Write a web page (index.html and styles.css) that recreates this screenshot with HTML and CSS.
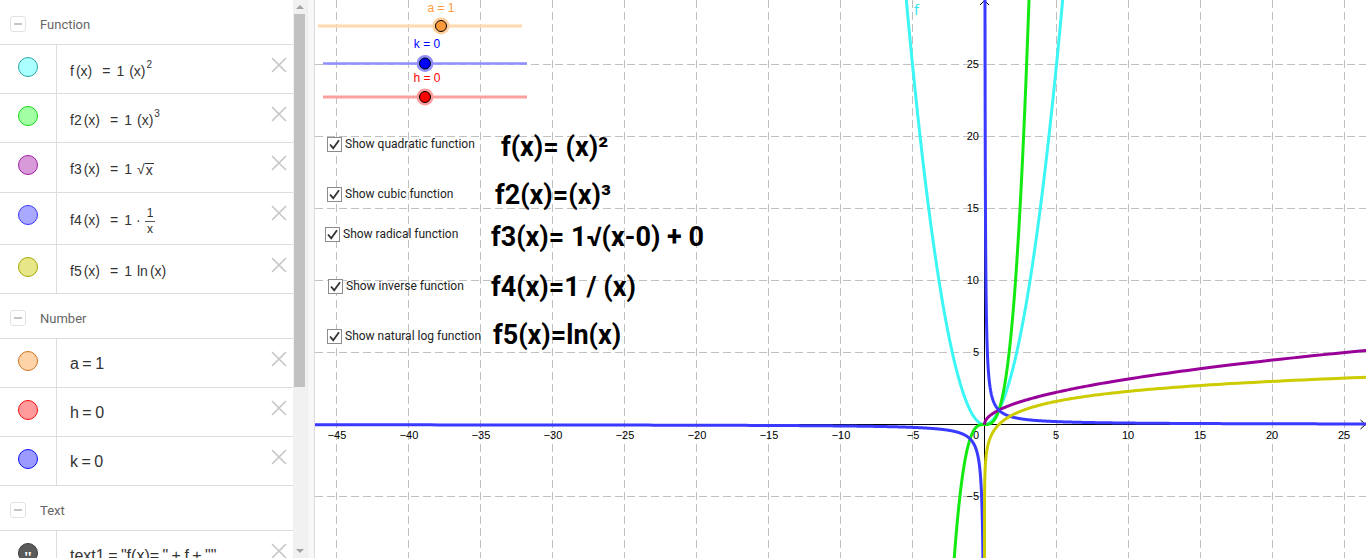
FILE: index.html
```html
<!DOCTYPE html>
<html lang="en">
<head>
<meta charset="utf-8">
<title>Parent functions</title>
<link rel="stylesheet" href="styles.css">
</head>
<body>
<div class="app">
  <aside class="algebra">
    <div class="list">
      <div class="group-head first"><span class="toggle"></span><span>Function</span></div>

      <div class="item">
        <div class="marker-col"><span class="marker m-f"></span></div>
        <div class="expr"><span>f</span><span class="sp"></span><span>(x)</span><span class="rel">=</span><span>1</span><span class="sp2"></span><span>(x)</span><sup>2</sup></div>
        <svg class="del" viewBox="0 0 16 16"><path d="M1 1L15 15M15 1L1 15"/></svg>
      </div>

      <div class="item">
        <div class="marker-col"><span class="marker m-f2"></span></div>
        <div class="expr"><span>f2</span><span class="sp"></span><span>(x)</span><span class="rel">=</span><span>1</span><span class="sp2"></span><span>(x)</span><sup>3</sup></div>
        <svg class="del" viewBox="0 0 16 16"><path d="M1 1L15 15M15 1L1 15"/></svg>
      </div>

      <div class="item tall1">
        <div class="marker-col"><span class="marker m-f3"></span></div>
        <div class="expr"><span>f3</span><span class="sp"></span><span>(x)</span><span class="rel">=</span><span>1</span><span class="sp2"></span><span class="root">√</span><span class="radicand">x</span></div>
        <svg class="del" viewBox="0 0 16 16"><path d="M1 1L15 15M15 1L1 15"/></svg>
      </div>

      <div class="item tall2">
        <div class="marker-col"><span class="marker m-f4"></span></div>
        <div class="expr"><span>f4</span><span class="sp"></span><span>(x)</span><span class="rel">=</span><span>1</span><span class="dot">·</span><span class="frac"><span class="num">1</span><span class="den">x</span></span></div>
        <svg class="del" viewBox="0 0 16 16"><path d="M1 1L15 15M15 1L1 15"/></svg>
      </div>

      <div class="item">
        <div class="marker-col"><span class="marker m-f5"></span></div>
        <div class="expr"><span>f5</span><span class="sp"></span><span>(x)</span><span class="rel">=</span><span>1</span><span class="sp2"></span><span>ln</span><span class="sp"></span><span>(x)</span></div>
        <svg class="del" viewBox="0 0 16 16"><path d="M1 1L15 15M15 1L1 15"/></svg>
      </div>

      <div class="group-head"><span class="toggle"></span><span>Number</span></div>

      <div class="item">
        <div class="marker-col"><span class="marker m-a"></span></div>
        <div class="expr num-expr">a = 1</div>
        <svg class="del" viewBox="0 0 16 16"><path d="M1 1L15 15M15 1L1 15"/></svg>
      </div>

      <div class="item">
        <div class="marker-col"><span class="marker m-h"></span></div>
        <div class="expr num-expr">h = 0</div>
        <svg class="del" viewBox="0 0 16 16"><path d="M1 1L15 15M15 1L1 15"/></svg>
      </div>

      <div class="item">
        <div class="marker-col"><span class="marker m-k"></span></div>
        <div class="expr num-expr">k = 0</div>
        <svg class="del" viewBox="0 0 16 16"><path d="M1 1L15 15M15 1L1 15"/></svg>
      </div>

      <div class="group-head"><span class="toggle"></span><span>Text</span></div>

      <div class="item">
        <div class="marker-col"><span class="marker m-text"><span class="quote">"</span></span></div>
        <div class="expr num-expr">text1 = "f(x)= " + f + ""</div>
        <svg class="del" viewBox="0 0 16 16"><path d="M1 1L15 15M15 1L1 15"/></svg>
      </div>
    </div>
    <div class="scrollbar">
      <div class="sb-btn"><span class="tri-up"></span></div>
      <div class="thumb"></div>
      <div class="sb-fill"></div>
      <div class="sb-btn"><span class="tri-down"></span></div>
    </div>
  </aside>

  <div class="splitter"></div>

  <main class="graphics">
    <svg class="plot" width="1051" height="558" viewBox="315 0 1051 558">
      <g class="grid">
        <path d="M336.5 0V558M408.5 0V558M480.5 0V558M552.5 0V558M624.5 0V558M696.5 0V558M768.5 0V558M840.5 0V558M912.5 0V558M1056.5 0V558M1128.5 0V558M1200.5 0V558M1272.5 0V558M1344.5 0V558"/>
        <path d="M315 64.5H1366M315 136.5H1366M315 208.5H1366M315 280.5H1366M315 352.5H1366M315 496.5H1366"/>
      </g>
      <g class="axes">
        <path d="M315 424.5H1365.5M984.5 558V0.5"/>
        <path d="M1360.5 420L1365.5 424.5L1360.5 429M980 5L984.5 0.5L989 5"/>
      </g>
      <g class="xlabels">
        <text x="337" y="439">−45</text>
        <text x="409" y="439">−40</text>
        <text x="481" y="439">−35</text>
        <text x="553" y="439">−30</text>
        <text x="625" y="439">−25</text>
        <text x="697" y="439">−20</text>
        <text x="769" y="439">−15</text>
        <text x="841" y="439">−10</text>
        <text x="913" y="439">−5</text>
        <text x="1056" y="439">5</text>
        <text x="1128" y="439">10</text>
        <text x="1200" y="439">15</text>
        <text x="1272" y="439">20</text>
        <text x="1344" y="439">25</text>
      </g>
      <g class="ylabels">
        <text x="979" y="439">0</text>
        <text x="979" y="68">25</text>
        <text x="979" y="140">20</text>
        <text x="979" y="212">15</text>
        <text x="979" y="284">10</text>
        <text x="979" y="356">5</text>
        <text x="979" y="500">−5</text>
      </g>
      <g id="curves"></g>
      <text class="flabel" x="914" y="15">f</text>
      <g class="slider">
        <path class="track-a" d="M318 26H522"/>
        <circle class="halo-a" cx="441" cy="26" r="8.5"/>
        <circle class="pt-a" cx="441" cy="26" r="5.5"/>
        <text class="lbl-a" x="441" y="12">a = 1</text>
      </g>
      <g class="slider">
        <path class="track-k" d="M323 63.5H527"/>
        <circle class="halo-k" cx="425" cy="63.5" r="8.5"/>
        <circle class="pt-k" cx="425" cy="63.5" r="5.5"/>
        <text class="lbl-k" x="427" y="48">k = 0</text>
      </g>
      <g class="slider">
        <path class="track-h" d="M323 97H527"/>
        <circle class="halo-h" cx="425" cy="97" r="8.5"/>
        <circle class="pt-h" cx="425" cy="97" r="5.5"/>
        <text class="lbl-h" x="427" y="82">h = 0</text>
      </g>
    </svg>

    <label class="cb cb1"><svg class="box" viewBox="0 0 15 15"><rect x="0.5" y="0.5" width="14" height="14"/><path d="M3 7.5L6.2 11.2L12 3.2"/></svg><span>Show quadratic function</span></label>
    <label class="cb cb2"><svg class="box" viewBox="0 0 15 15"><rect x="0.5" y="0.5" width="14" height="14"/><path d="M3 7.5L6.2 11.2L12 3.2"/></svg><span>Show cubic function</span></label>
    <label class="cb cb3"><svg class="box" viewBox="0 0 15 15"><rect x="0.5" y="0.5" width="14" height="14"/><path d="M3 7.5L6.2 11.2L12 3.2"/></svg><span>Show radical function</span></label>
    <label class="cb cb4"><svg class="box" viewBox="0 0 15 15"><rect x="0.5" y="0.5" width="14" height="14"/><path d="M3 7.5L6.2 11.2L12 3.2"/></svg><span>Show inverse function</span></label>
    <label class="cb cb5"><svg class="box" viewBox="0 0 15 15"><rect x="0.5" y="0.5" width="14" height="14"/><path d="M3 7.5L6.2 11.2L12 3.2"/></svg><span>Show natural log function</span></label>

    <div class="big t1">f(x)= (x)²</div>
    <div class="big t2">f2(x)=(x)³</div>
    <div class="big t3">f3(x)= 1√(x-0) + 0</div>
    <div class="big t4">f4(x)=1 / (x)</div>
    <div class="big t5">f5(x)=ln(x)</div>
  </main>
</div>
<script src="script.js"></script>
</body>
</html>
```

FILE: styles.css
```css
* { box-sizing: border-box; margin: 0; padding: 0; }
html, body { width: 1366px; height: 558px; overflow: hidden; background: #fff; }
body { font-family: "Liberation Sans", Arial, sans-serif; color: #333; }

.app { display: flex; height: 558px; }

/* ---------- algebra view ---------- */
.algebra { display: flex; width: 307px; flex: none; height: 558px; overflow: hidden; background: #fff; }
.list { width: 293px; flex: none; }

.group-head {
  height: 44px; display: flex; align-items: center; gap: 14px;
  padding: 4px 0 0 10px;
  font-family: Roboto, "Liberation Sans", sans-serif; font-size: 13px; color: #666;
}
.group-head:not(.first) { height: 45px; border-top: 1px solid #ddd; }
.toggle {
  width: 16px; height: 16px; border: 1px solid #e2e2e2; border-radius: 3px;
  display: flex; align-items: center; justify-content: center; flex: none;
}
.toggle::before { content: ""; width: 8px; height: 2px; background: #c4c4c4; }

.item { display: flex; height: 49px; border-top: 1px solid #ddd; }
.item.tall1 { height: 50px; }
.item.tall2 { height: 52px; }
.marker-col { width: 57px; flex: none; border-right: 1px solid #ddd; padding: 12px 0 0 18px; }
.marker {
  display: flex; align-items: center; justify-content: center;
  width: 20px; height: 20px; border-radius: 50%; border: 1px solid;
}
.m-f { background: #aaffff; border-color: #2aa6a6; }
.m-f2 { background: #a3ffa3; border-color: #14d414; }
.m-f3 { background: #d99ad9; border-color: #a01ea0; }
.m-f4 { background: #a9a9ff; border-color: #3737ff; }
.m-f5 { background: #e7e78a; border-color: #a6a600; }
.m-a { background: #ffd3a8; border-color: #d0731f; }
.m-h { background: #ff9b9b; border-color: #f01010; }
.m-k { background: #9b9bff; border-color: #1010f0; }
.m-text { background: #5a5a5a; border-color: #3a3a3a; }
.quote { color: #fff; font: bold 17px/1 "Liberation Serif", serif; margin-top: 8px; }

.expr {
  flex: 1; display: flex; align-items: center; padding: 3px 0 0 13px;
  font-size: 14px; color: #333; white-space: nowrap;
}
.expr .sp { width: 2px; }
.expr .sp2 { width: 5px; }
.expr .rel { margin: 0 6px 0 10px; }
.expr sup { font-size: 10px; align-self: flex-start; margin-top: 11px; margin-left: 1px; }
.expr .root { font-size: 14px; }
.expr .radicand { border-top: 1px solid #333; line-height: 13px; margin-top: 1px; padding: 0 1px; }
.expr .dot { margin: 0 4px; }
.frac { display: inline-flex; flex-direction: column; align-items: center; font-size: 12px; line-height: 12px; }
.frac .num { border-bottom: 1px solid #555; padding: 1px 2px 2px; }
.frac .den { padding-top: 1px; }
.num-expr { font-size: 16px; padding-top: 1px; word-spacing: -1px; }

.del { width: 16px; height: 16px; margin: 12px 6px 0 0; flex: none; }
.del path { stroke: #c6c6c6; stroke-width: 1.6; fill: none; }

.scrollbar {
  width: 14px; flex: none; display: flex; flex-direction: column;
  background: #f1f1f1;
}
.sb-btn { height: 14px; display: flex; align-items: center; justify-content: center; flex: none; }
.tri-up { width: 0; height: 0; border-left: 4px solid transparent; border-right: 4px solid transparent; border-bottom: 4px solid #a3a3a3; }
.tri-down { width: 0; height: 0; border-left: 4px solid transparent; border-right: 4px solid transparent; border-top: 4px solid #a3a3a3; }
.thumb { height: 373px; margin: 0 2px 0 1px; background: #c1c1c1; flex: none; }
.sb-fill { flex: 1; }

.splitter {
  width: 8px; flex: none; height: 558px;
  background: #f7f7f7; border-left: 1px solid #ececec; border-right: 1px solid #dcdcdc;
}

/* ---------- graphics view ---------- */
.graphics { position: relative; flex: 1; height: 558px; overflow: hidden; background: #fff; }
.plot { display: block; }
.grid path { stroke: #c0c0c0; stroke-width: 1; stroke-dasharray: 8 4; fill: none; }
.axes path { stroke: #000; stroke-width: 1; fill: none; }
.xlabels text, .ylabels text { font-family: "Liberation Sans", Arial, sans-serif; font-size: 11px; fill: #000; }
.xlabels text { text-anchor: middle; }
.ylabels text { text-anchor: end; }
.curve { fill: none; stroke-width: 3; stroke-linejoin: round; stroke-linecap: butt; }
.c-f { stroke: #3cf5f5; }
.c-f2 { stroke: #12ea12; }
.c-f3 { stroke: #990099; }
.c-f4 { stroke: #3939ff; }
.c-f5 { stroke: #cccc00; }
.flabel { font-size: 14px; fill: #2ee6ee; font-family: "DejaVu Sans", sans-serif; }

.slider text { font-family: "Liberation Sans", Arial, sans-serif; font-size: 12px; text-anchor: middle; }
.track-a { stroke: #ffd9b0; stroke-width: 3; }
.halo-a { fill: #ffcf9e; }
.pt-a { fill: #ff9a3a; stroke: #000; stroke-width: 1; }
.lbl-a { fill: #ff9a3a; }
.track-k { stroke: #8f8fff; stroke-width: 2.5; }
.halo-k { fill: #8f8fff; }
.pt-k { fill: #0000ff; stroke: #000; stroke-width: 1; }
.lbl-k { fill: #0000ff; }
.track-h { stroke: #ffa0a0; stroke-width: 3; }
.halo-h { fill: #ff9c9c; }
.pt-h { fill: #ff0000; stroke: #000; stroke-width: 1; }
.lbl-h { fill: #ff0000; }

.cb {
  position: absolute; display: flex; align-items: center; gap: 3px;
  font-family: Roboto, "Liberation Sans", sans-serif; font-size: 12px; color: #222;
  line-height: 15px; white-space: nowrap;
}
.cb .box { width: 15px; height: 15px; flex: none; }
.cb .box rect { fill: #fff; stroke: #8c8c8c; stroke-width: 1; }
.cb .box path { fill: none; stroke: #333; stroke-width: 1.8; }
.cb1 { left: 12px; top: 137px; }
.cb2 { left: 12px; top: 187px; }
.cb3 { left: 10px; top: 227px; }
.cb4 { left: 13px; top: 279px; }
.cb5 { left: 12px; top: 329px; }

.big {
  position: absolute; font-family: Roboto, "Liberation Sans", sans-serif;
  font-weight: bold; font-size: 27px; line-height: 30px; color: #000; white-space: nowrap;
}
.t1 { left: 186px; top: 132px; }
.t2 { left: 180px; top: 180px; }
.t3 { left: 176px; top: 222px; }
.t4 { left: 176px; top: 272px; }
.t5 { left: 178px; top: 320px; }
```

FILE: script.js
```js
(function () {
  var NS = 'http://www.w3.org/2000/svg';
  var g = document.getElementById('curves');
  function X(x) { return 984.5 + 14.4 * x; }
  function Y(y) { return 424.5 - 14.4 * y; }
  function clampY(v) { return Math.max(-60, Math.min(620, v)); }
  function lin(a, b, n) { var r = []; for (var i = 0; i <= n; i++) r.push(a + (b - a) * i / n); return r; }
  function logs(a, b, n) {
    var r = [], la = Math.log(a), lb = Math.log(b);
    for (var i = 0; i <= n; i++) r.push(Math.exp(la + (lb - la) * i / n));
    return r;
  }
  function curve(f, xs, cls) {
    var d = '';
    for (var i = 0; i < xs.length; i++) {
      var x = xs[i];
      var py = clampY(Y(f(x)));
      d += (i ? 'L' : 'M') + X(x).toFixed(2) + ' ' + py.toFixed(2);
    }
    var p = document.createElementNS(NS, 'path');
    p.setAttribute('d', d);
    p.setAttribute('class', 'curve ' + cls);
    g.appendChild(p);
  }
  curve(function (x) { return x * x; }, lin(-5.8, 5.8, 500), 'c-f');
  curve(function (x) { return x * x * x; }, lin(-2.4, 3.2, 400), 'c-f2');
  curve(function (x) { return Math.sqrt(x); }, [0].concat(logs(1e-6, 27, 500)), 'c-f3');
  curve(function (x) { return 1 / x; }, logs(0.0005, 47, 800).map(function (v) { return -v; }), 'c-f4');
  curve(function (x) { return 1 / x; }, logs(0.0005, 27, 800), 'c-f4');
  curve(function (x) { return Math.log(x); }, logs(1e-6, 27, 600), 'c-f5');
})();
```
